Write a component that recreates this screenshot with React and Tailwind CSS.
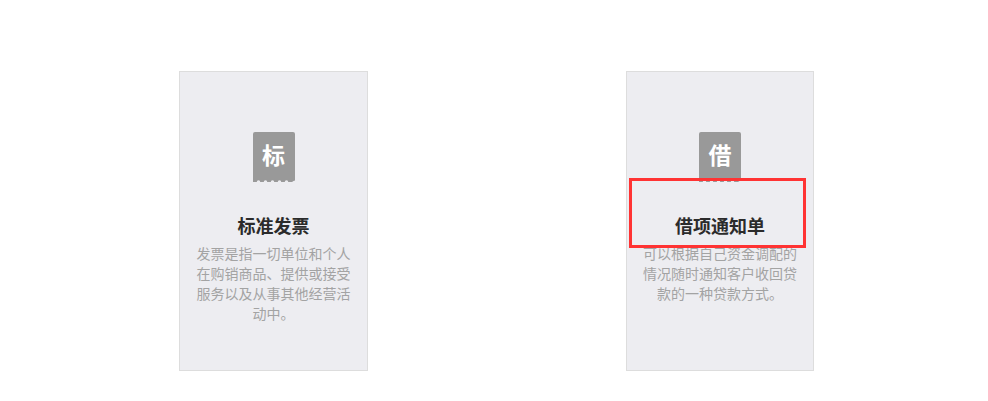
const cards = [
  {
    icon: "标",
    title: "标准发票",
    desc: "发票是指一切单位和个人在购销商品、提供或接受服务以及从事其他经营活动中。",
    width: "w-[189px]",
  },
  {
    icon: "借",
    title: "借项通知单",
    desc: "可以根据自己资金调配的情况随时通知客户收回贷款的一种贷款方式。",
    width: "w-[188px]",
  },
];

const TicketIcon = ({ label }) => {
  return (
    <div className="relative w-[42px] h-[50px]">
      <svg width="42" height="50" viewBox="0 0 42 50" className="block">
        <path
          d="M2 0H40a2 2 0 0 1 2 2V48.5Q40.5 48.5 39 50H35.25a1.75 1.75 0 0 0-3.5 0H28.25a1.75 1.75 0 0 0-3.5 0H21.25a1.75 1.75 0 0 0-3.5 0H14.25a1.75 1.75 0 0 0-3.5 0H7.25a1.75 1.75 0 0 0-3.5 0H0V2a2 2 0 0 1 2-2z"
          fill="#999999"
        />
      </svg>
      <span className="absolute left-0 right-0 top-[5px] text-center text-[23px] leading-[38px] font-bold text-white">
        {label}
      </span>
    </div>
  );
};

const Card = ({ icon, title, desc, width }) => {
  return (
    <div className={`${width} h-[300px] shrink-0 bg-[#ededf1] border border-[#dddddd] pt-[60px] flex flex-col items-center`}>
      <TicketIcon label={icon} />
      <h3 className="mt-[31px] text-[18px] leading-[28px] font-bold text-[#2b2b2b]">{title}</h3>
      <p className="mt-[3px] w-[156px] text-center text-[14px] leading-[20px] text-[#a3a3a3]">{desc}</p>
    </div>
  );
};

const App = () => {
  return (
    <div
      className="relative w-[988px] h-[401px] bg-white overflow-hidden pt-[71px] pl-[179px] flex gap-[258px]"
      style={{ fontFamily: '"Liberation Sans", "Noto Sans CJK SC", sans-serif' }}
    >
      {cards.map((card) => (
        <Card key={card.title} {...card} />
      ))}
      <div className="absolute left-[629px] top-[178px] w-[177px] h-[70px] border-[3px] border-[#ff3333]" />
    </div>
  );
};

export default App;
